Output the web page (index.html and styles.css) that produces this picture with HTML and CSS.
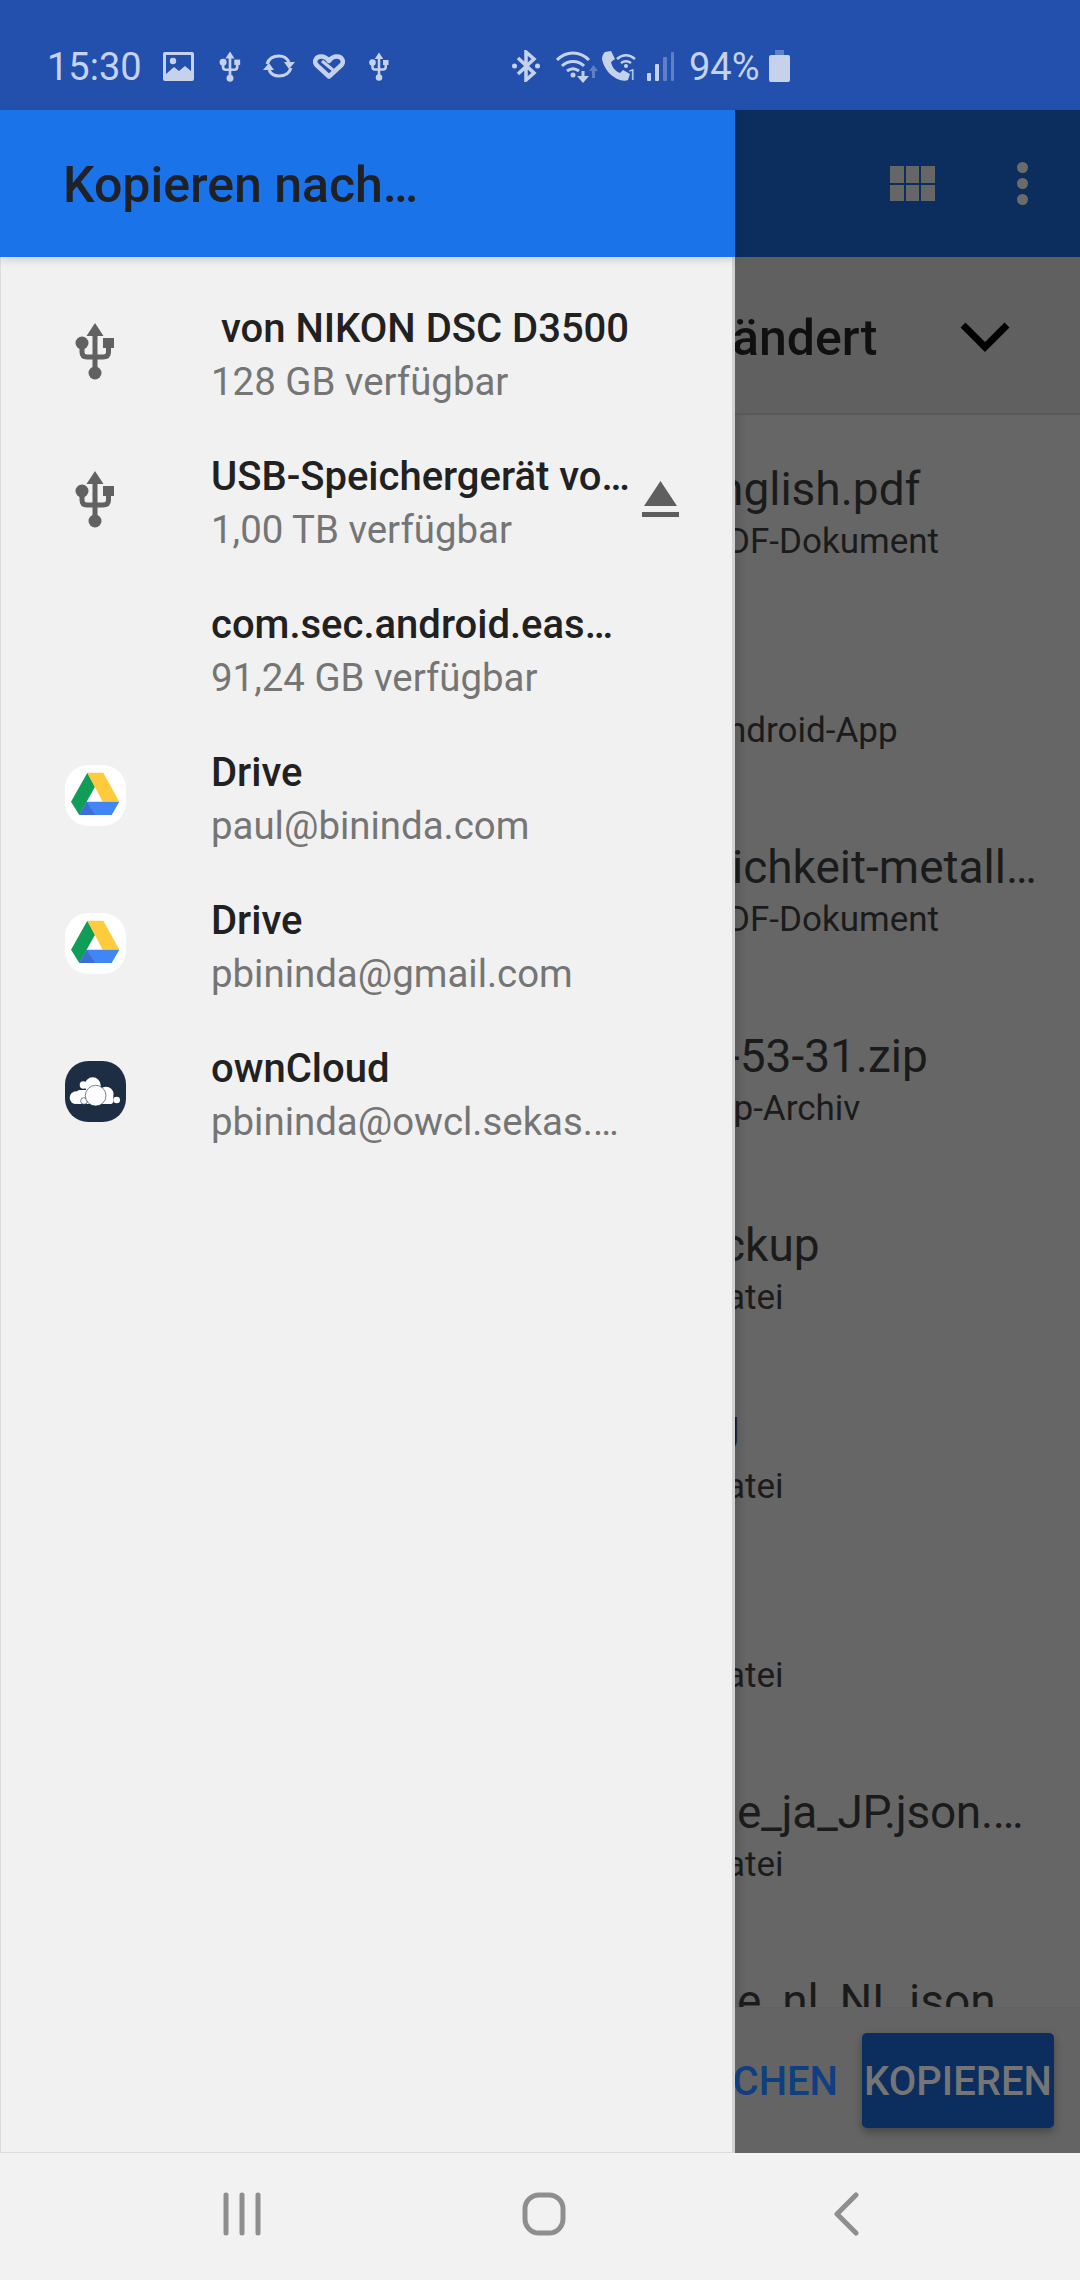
FILE: index.html
```html
<!DOCTYPE html>
<html lang="de">
<head>
<meta charset="utf-8">
<title>Kopieren nach…</title>
<link rel="stylesheet" href="styles.css">
</head>
<body>
<div class="phone">
  <header class="status">
    <span class="clock">15:30</span>
    <svg class="si si-image" viewBox="0 0 31 29"><rect width="31" height="29" rx="2" class="lt"/><rect x="3" y="3" width="25" height="19" class="bg"/><circle cx="10" cy="9" r="3.2" class="lt"/><path class="lt" d="M3 22l8-7 5 4 6-5 6 5v5H3z"/></svg>
    <svg class="si si-usb" viewBox="75 320 40 60"><use href="#usb"/></svg>
    <svg class="si si-sync" viewBox="0 0 32 24"><path class="ln" d="M4 10C6 4 11 2 16 2c5 0 8 2 10 6"/><path class="lt" d="M21 8h11l-6 7z"/><path class="ln" d="M28 14c-2 6-7 8-12 8-5 0-8-2-10-6"/><path class="lt" d="M11 16H0l6-7z"/></svg>
    <svg class="si si-heart" viewBox="0 0 32 25"><path class="ln ln4" d="M16 22.500 3.500 11C.5 7.500 3 2.500 8 2.500c3 0 6 1.500 8 4.500 2-3 5-4.500 8-4.500 5 0 7.500 5 4.500 8.500z"/><path class="ln" d="M9 7l11 9"/></svg>
    <svg class="si si-usb2" viewBox="75 320 40 60"><use href="#usb"/></svg>
    <svg class="si si-bt" viewBox="0 0 28 32"><path class="ln ln35" d="M6 8l16 15-8 7V2l8 7L6 24"/><circle cx="2.500" cy="16" r="2.500" class="lt"/><circle cx="25.500" cy="16" r="2.500" class="lt"/></svg>
    <svg class="si si-wifi" viewBox="0 0 42 33"><path class="ln" d="M1 10C10 .5 24 .5 33 10M6 16c6-6 16-6 22 0M11 21c4-3 8-3 12 0"/><circle cx="17" cy="25" r="2.500" class="lt"/><path class="ln" d="M27 21v9"/><path class="lt" d="M21 26h12l-6 7z"/><path class="dim" d="M33 21l4.500-6 4.500 6h-3v7h-3v-7z"/></svg>
    <svg class="si si-call" viewBox="0 0 36 30"><path class="lt" d="M3 1 9 0l4 8-4 3c1 5 4 9 9 11l3-3 7 4-2 6c-2 1-5 1-8 0C9 26 2 18 0 8c0-3 1-5 3-7z"/><path class="ln ln2" d="M15 8c6-5 12-5 18 0M19 12c3-2 7-2 10 0"/><circle cx="24" cy="15" r="2" class="lt"/><text x="26" y="29" class="calln">1</text></svg>
    <svg class="si si-signal" viewBox="0 0 27 29"><rect x="0" y="21" width="4" height="8" rx="1" class="lt"/><rect x="8" y="12" width="4" height="17" rx="1" class="lt"/><rect x="16" y="5" width="4" height="24" rx="1" class="dim"/><rect x="24" y="0" width="3" height="29" rx="1" class="dim"/></svg>
    <span class="pct">94%</span>
    <svg class="si si-batt" viewBox="0 0 21 32"><rect x="6" y="0" width="9" height="6" class="dim"/><rect x="0" y="5" width="21" height="27" rx="2" class="lt"/></svg>
  </header>

  <svg class="defs" aria-hidden="true"><defs>
    <g id="usb">
      <path fill="currentColor" d="M95 323l8.500 13h-17z"/>
      <path fill="none" stroke="currentColor" stroke-width="5" d="M95 334v38M82 345v7q0 5 5 5h16q5.500 0 5.500-5v-6"/>
      <circle fill="currentColor" cx="95" cy="373" r="6.500"/>
      <circle fill="currentColor" cx="82" cy="343" r="6.500"/>
      <rect fill="currentColor" x="103" y="338" width="11" height="10"/>
    </g>
    <g id="drive">
      <rect x="45" y="45" width="183" height="183" rx="70" fill="#fff"/>
      <path fill="#0f9d58" d="M112 68l23 42-47 85-25-40z"/>
      <path fill="#ffcb3d" d="M112 68h48l48 87h-50z"/>
      <path fill="#4285f4" d="M110 155h98l-23 40H88z"/>
      <path fill="#3c6fd6" d="M110 155l25 40H88z"/>
    </g>
  </defs></svg>

  <main class="stage">
    <aside class="drawer">
      <div class="drawer-head"><h1 class="drawer-title">Kopieren nach…</h1></div>
      <ul class="roots">
        <li class="root">
          <span class="root-icon"><svg class="usb" viewBox="75 320 40 60"><use href="#usb"/></svg></span>
          <div class="root-text"><div class="root-title">&nbsp;von NIKON DSC D3500</div><div class="root-sub">128 GB verfügbar</div></div>
        </li>
        <li class="root">
          <span class="root-icon"><svg class="usb" viewBox="75 320 40 60"><use href="#usb"/></svg></span>
          <div class="root-text"><div class="root-title">USB-Speichergerät vo…</div><div class="root-sub">1,00 TB verfügbar</div></div>
          <svg class="eject" viewBox="0 0 37 36"><path d="M18.500 0 35 25H2z"/><rect y="31" width="37" height="5"/></svg>
        </li>
        <li class="root">
          <span class="root-icon"></span>
          <div class="root-text"><div class="root-title">com.sec.android.eas…</div><div class="root-sub">91,24 GB verfügbar</div></div>
        </li>
        <li class="root">
          <span class="root-icon"><svg class="app" viewBox="45 45 183 183"><use href="#drive"/></svg></span>
          <div class="root-text"><div class="root-title">Drive</div><div class="root-sub">paul@bininda.com</div></div>
        </li>
        <li class="root">
          <span class="root-icon"><svg class="app" viewBox="45 45 183 183"><use href="#drive"/></svg></span>
          <div class="root-text"><div class="root-title">Drive</div><div class="root-sub">pbininda@gmail.com</div></div>
        </li>
        <li class="root">
          <span class="root-icon"><svg class="app" viewBox="45 33 183 183"><rect x="45" y="33" width="183" height="183" rx="70" fill="#1d2d44"/><g fill="#fff"><circle cx="200" cy="150" r="10"/><circle cx="168" cy="132" r="22"/><circle cx="78" cy="143" r="19"/><circle cx="100" cy="105" r="11"/><circle cx="128" cy="106" r="24"/><rect x="80" y="120" width="110" height="42" rx="10"/></g><g fill="#fff" stroke="#1d2d44" stroke-width="1.800"><circle cx="102" cy="153" r="10"/><circle cx="137" cy="137" r="31"/></g></svg></span>
          <div class="root-text"><div class="root-title">ownCloud</div><div class="root-sub">pbininda@owcl.sekas.…</div></div>
        </li>
      </ul>
    </aside>

    <section class="behind">
      <div class="appbar">
        <div class="grid-icon"><i></i><i></i><i></i><i></i><i></i><i></i></div>
        <div class="more-icon"><i></i><i></i><i></i></div>
      </div>
      <div class="sort">
        <span class="sort-label">ändert</span>
        <svg class="chev" viewBox="0 0 50 30"><path d="M3 3l22 22L47 3"/></svg>
      </div>
      <ul class="files">
        <li class="file"><div class="fname n1">nglish.pdf</div><div class="fsub s1">DF-Dokument</div></li>
        <li class="file"><div class="fname"></div><div class="fsub s2">ndroid-App</div></li>
        <li class="file"><div class="fname n7">ichkeit-metall…</div><div class="fsub s1">DF-Dokument</div></li>
        <li class="file"><div class="fname n4">-53-31.zip</div><div class="fsub s4">ip-Archiv</div></li>
        <li class="file"><div class="fname n5">ckup</div><div class="fsub s3">atei</div></li>
        <li class="file"><div class="fname n6">J</div><div class="fsub s3">atei</div></li>
        <li class="file"><div class="fname"></div><div class="fsub s3">atei</div></li>
        <li class="file"><div class="fname n3 n8">e_ja_JP.json.…</div><div class="fsub s3">atei</div></li>
        <li class="file"><div class="fname n3">e_nl_NL.json</div></li>
      </ul>
      <div class="actions">
        <span class="act-text">CHEN</span>
        <span class="act-btn">KOPIEREN</span>
      </div>
    </section>
  </main>

  <nav class="navbar">
    <span class="nav-cell"><svg class="nav-i" width="40" height="44" viewBox="0 0 40 44"><path d="M4 3v38M20 3v38M36 3v38"/></svg></span>
    <span class="nav-cell"><svg class="nav-i" width="44" height="44" viewBox="0 0 44 44"><rect x="3" y="3" width="38" height="38" rx="14"/></svg></span>
    <span class="nav-cell"><svg class="nav-i" width="26" height="44" viewBox="0 0 26 44"><path d="M23 3 4 22l19 19"/></svg></span>
  </nav>
</div>
</body>
</html>
```

FILE: styles.css
```css
* { box-sizing: border-box; }
html, body { margin: 0; padding: 0; }
body { font-family: Roboto, "Liberation Sans", sans-serif; background: #666; }
ul { list-style: none; margin: 0; padding: 0; }
h1 { margin: 0; }
.phone { width: 1080px; height: 2280px; display: flex; flex-direction: column; overflow: hidden; }

/* status bar */
.status { flex: none; height: 110px; padding: 22px 0 0 48px; background: #2450ad; color: #c6d2ec; display: flex; align-items: center; }
.clock { font-size: 38px; width: 94px; white-space: nowrap; margin-top: 2px; margin-left: -1px; padding-right: 1px; }
.pct { font-size: 38px; margin: 2px 0 0 15px; width: 69px; white-space: nowrap; }
.si { display: block; flex: none; color: #c6d2ec; }
.lt { fill: #c6d2ec; }
.bg { fill: #2450ad; }
.dim { fill: #5f7fc6; }
.ln { fill: none; stroke: #c6d2ec; stroke-width: 3; }
.ln2 { stroke-width: 2.5; }
.ln35 { stroke-width: 3.5; }
.ln4 { stroke-width: 4.5; stroke-linejoin: round; }
.calln { font-size: 15px; fill: #c6d2ec; font-family: Roboto, sans-serif; }
.si-image { width: 31px; height: 29px; margin-left: 22px; }
.si-usb { width: 22px; height: 32px; margin-left: 25px; }
.si-sync { width: 32px; height: 24px; margin-left: 22px; }
.si-heart { width: 32px; height: 25px; margin-left: 18px; }
.si-usb2 { width: 20px; height: 30px; margin-left: 24px; }
.si-bt { width: 28px; height: 32px; margin-left: 123px; }
.si-wifi { width: 42px; height: 33px; margin-left: 16px; }
.si-call { width: 36px; height: 30px; margin-left: 4px; }
.si-signal { width: 27px; height: 29px; margin-left: 9px; }
.si-batt { width: 21px; height: 32px; margin-left: 11px; }
.defs { width: 0; height: 0; display: block; flex: none; }

/* two panes */
.stage { flex: 1; min-height: 0; display: flex; }
.drawer { flex: none; width: 735px; background: #f1f1f1; border-left: 1px solid #dcdcdc; border-right: 3px solid #d2d2d2; border-bottom: 1px solid #dcdcdc; display: flex; flex-direction: column; }
.drawer-head { flex: none; height: 147px; margin: 0 -3px 0 -1px; padding-left: 63px; background: #1a73e8; display: flex; align-items: center; position: relative; box-shadow: 0 3px 8px rgba(0, 0, 0, .14); }
.drawer-title { font-size: 50px; font-weight: 500; color: #202124; padding-top: 2px; }
.roots { padding-top: 24px; }
.root { height: 148px; display: flex; align-items: center; }
.root-icon { flex: none; width: 210px; padding: 0 0 7px 64px; display: flex; }
.root-text { flex: none; width: 431px; }
.root-title { font-size: 40px; font-weight: 500; line-height: 48px; color: #212121; white-space: nowrap; }
.root-sub { font-size: 38.4px; line-height: 48px; margin-top: 5px; color: #757575; white-space: nowrap; }
.usb { width: 40px; height: 60px; margin: 0 0 3px 10px; color: #616161; display: block; }
.app { width: 61px; height: 61px; display: block; }
.eject { width: 37px; height: 36px; fill: #5f5f5f; margin-bottom: 8px; }

/* obscured screen behind the drawer */
.behind { flex: 1; min-width: 0; display: flex; flex-direction: column; overflow: hidden; background: linear-gradient(90deg, #5c5c5c, #666 12px); color: #1b1b1b; }
.appbar { flex: none; height: 147px; background: #0b2e5e; display: flex; align-items: center; padding: 0 0 0 155px; }
.grid-icon { width: 45px; height: 35px; display: grid; grid-template-columns: repeat(3, 1fr); grid-template-rows: repeat(2, 1fr); gap: 2px; }
.grid-icon i { background: #666; }
.more-icon { margin-left: 82px; display: flex; flex-direction: column; gap: 5px; }
.more-icon i { width: 11px; height: 11px; border-radius: 50%; background: #6b6b6b; }
.sort { flex: none; height: 158px; background: #606060; border-bottom: 2px solid #585858; display: flex; align-items: center; padding-bottom: 4px; color: #101010; }
.sort-label { font-size: 50px; font-weight: 500; width: 228px; margin-left: -3px; white-space: nowrap; margin-top: 10px; }
.chev { width: 50px; height: 30px; fill: none; stroke: #000; stroke-width: 7; margin-top: 7px; }
.files { flex: 1; min-height: 0; overflow: hidden; padding-top: 46px; }
.file { height: 189px; }
.fname { font-size: 46px; line-height: 56px; height: 56px; white-space: nowrap; }
.fsub { font-size: 35px; line-height: 42px; margin-top: 4px; white-space: nowrap; }
.n1 { margin-left: -17px; }
.n3 { margin-left: 2px; }
.n4 { margin-left: -8px; }
.n5 { margin-left: -14px; }
.n6 { margin-left: -20px; }
.n7 { margin-left: -3px; }
.n8 { letter-spacing: -.3px; }
.s1 { margin-left: -8px; }
.s2 { margin-left: -8px; }
.s3 { margin-left: -9px; }
.s4 { margin-left: -10px; }
.actions { flex: none; height: 146px; border-top: 1px solid #626262; background: #646464; display: flex; justify-content: flex-end; gap: 24px; padding: 26px 26px 0 0; }
.act-text { font-size: 40px; font-weight: 500; color: #0f3f80; line-height: 95px; white-space: nowrap; }
.act-btn { flex: none; width: 192px; height: 95px; margin-top: -1px; border-radius: 5px; background: #0b2e5e; color: #757575; font-size: 40px; font-weight: 500; line-height: 97px; display: flex; justify-content: center; box-shadow: 0 4px 8px rgba(0, 0, 0, .3); white-space: nowrap; }

/* navigation bar */
.navbar { flex: none; height: 127px; background: #f2f2f2; padding: 0 0 5px 8px; display: grid; grid-template-columns: repeat(3, 302px); justify-content: center; align-items: center; }
.nav-cell { display: flex; justify-content: center; }
.nav-i { fill: none; stroke: #8e8e8e; stroke-width: 5; stroke-linecap: round; stroke-linejoin: round; }
```
